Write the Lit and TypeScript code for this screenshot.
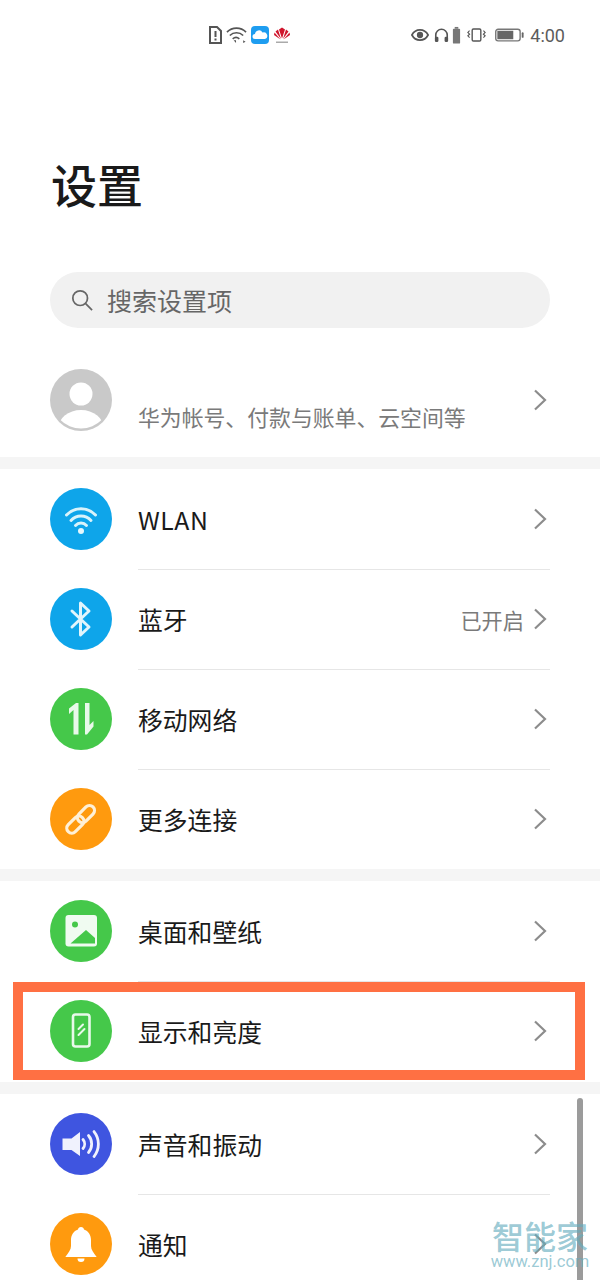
import { LitElement, html, css, svg } from "lit";
import { customElement } from "lit/decorators.js";

const icons = {
  wifi: svg`<g fill="none" stroke="#d8f3fb" stroke-width="3" stroke-linecap="round">
      <path d="M16.5 27a20 20 0 0 1 29 0"/><path d="M21 32.500a13.500 13.500 0 0 1 20 0"/><path d="M25.500 37.500a7.500 7.500 0 0 1 11 0"/>
    </g><circle cx="31" cy="43" r="3" fill="#e6f8fd"/>`,
  bluetooth: svg`<path d="M22 23l17 16-8.500 8V15l8.500 8-17 16" fill="none" stroke="#e2f5fc" stroke-width="3" stroke-linejoin="round" stroke-linecap="round"/>`,
  mobile: svg`<path d="M23.500 46.500V22l-4.500 4v-5.500L26 15h2.500v31.500z" fill="#e8f9ea"/>
    <path d="M35 15h4.500v22l4-4v5.500L37 46.500h-2z" fill="#e8f9ea"/>`,
  link: svg`<g fill="none" stroke="#fff0d6" stroke-width="3.200" stroke-linecap="round" transform="rotate(-45 31 31)">
      <rect x="13" y="26" width="20" height="10" rx="5"/><rect x="28" y="26" width="20" height="10" rx="5"/>
    </g>`,
  picture: svg`<rect x="15.500" y="15" width="31.500" height="31.500" rx="3" fill="#f0fbf1"/>
    <circle cx="25" cy="24.500" r="3" fill="#45c84a"/>
    <path d="M20.500 43.500L36 30l9 8v5.500z" fill="#45c84a"/>`,
  phone: svg`<rect x="23" y="14.500" width="16.500" height="32" rx="2.500" fill="none" stroke="#e8f9ea" stroke-width="2.600"/>
    <path d="M28.500 29l4.500-4.500M28.500 35l6-6" stroke="#e8f9ea" stroke-width="2" stroke-linecap="round"/>`,
  sound: svg`<path d="M12.500 25.500h9L30 19v24l-8.500-6h-9z" fill="#f0f2fd"/>
    <g fill="none" stroke="#f0f2fd" stroke-width="2.800" stroke-linecap="round">
      <path d="M33 26.500a7 7 0 0 1 0 9"/><path d="M38.500 22.500a13 13 0 0 1 0 17"/><path d="M44 18.500a20 20 0 0 1 0 25"/>
    </g>`,
  bell: svg`<path d="M31 14c1.800 0 2.800 1 3 2.500 4.500 1.500 7 5.500 7 10.500v6c0 3.500 2.500 7 5.700 11H15.300c3.200-4 5.700-7.500 5.700-11v-6c0-5 2.500-9 7-10.500.2-1.500 1.200-2.500 3-2.500z" fill="#fff"/>
    <path d="M27.500 45.500h7a3.500 3.500 0 0 1-7 0z" fill="#fff"/>`,
};

type Row = { icon: keyof typeof icons; color: string; label: string; value?: string };

const groups: Row[][] = [
  [
    { icon: "wifi", color: "#0ea5ea", label: "WLAN" },
    { icon: "bluetooth", color: "#0ea5ea", label: "蓝牙", value: "已开启" },
    { icon: "mobile", color: "#45c84a", label: "移动网络" },
    { icon: "link", color: "#ff9a0e", label: "更多连接" },
  ],
  [
    { icon: "picture", color: "#45c84a", label: "桌面和壁纸" },
    { icon: "phone", color: "#45c84a", label: "显示和亮度" },
  ],
  [
    { icon: "sound", color: "#3f55e0", label: "声音和振动" },
    { icon: "bell", color: "#ff9a0e", label: "通知" },
  ],
];

const chevron = html`<svg class="chevron" width="14" height="22" viewBox="0 0 14 22">
  <path d="M2 1.500l10 9.500-10 9.500" fill="none" stroke="#8c8c8c" stroke-width="2.200"/>
</svg>`;

@customElement("app-root")
export class AppRoot extends LitElement {
  static styles = css`
    :host {
      display: block;
      position: relative;
      width: 600px;
      height: 1280px;
      overflow: hidden;
      background: #fff;
      color: #1a1a1a;
      font-family: "Noto Sans CJK SC", "Noto Sans", sans-serif;
    }
    .status {
      height: 70px;
      display: flex;
      align-items: center;
      padding-left: 208px;
      padding-right: 35px;
    }
    .status-left {
      display: flex;
      align-items: center;
      gap: 4px;
    }
    .status-right {
      display: flex;
      align-items: center;
      margin-left: auto;
    }
    .headset {
      margin-left: 5px;
    }
    .mini-battery {
      margin-left: 3px;
    }
    .vibrate {
      margin-left: 6px;
    }
    .battery {
      margin-left: 9px;
    }
    .time {
      font-family: "Roboto", sans-serif;
      font-size: 18px;
      margin-left: 5px;
      color: #5c5c5c;
    }
    .cloud {
      width: 18px;
      height: 18px;
      border-radius: 4px;
      background: #1e9df0;
      display: flex;
    }
    h1 {
      margin: 0;
      padding: 83px 0 0 51px;
      font-size: 46px;
      line-height: 60px;
      font-weight: 500;
    }
    .search {
      margin: 59px 50px 0;
      height: 56px;
      border-radius: 28px;
      background: #f1f1f1;
      display: flex;
      align-items: center;
      gap: 14px;
      padding-left: 21px;
      font-size: 25px;
      color: #666;
    }
    .profile {
      height: 114px;
      padding: 15px 50px 0;
      display: flex;
      align-items: center;
    }
    .avatar {
      display: block;
      flex: none;
    }
    .profile-text {
      flex: 1;
      margin-left: 26px;
      padding-top: 33px;
      font-size: 21.850px;
      color: #7a7a7a;
    }
    .gap {
      height: 12px;
      background: #f5f5f5;
    }
    .group:nth-child(4) {
      margin-bottom: 1px;
    }
    .row {
      height: 100px;
      display: flex;
      align-items: center;
      padding: 0 50px;
    }
    .row-icon {
      flex: none;
      display: block;
    }
    .row-body {
      flex: 1;
      align-self: flex-start;
      height: 100px;
      margin-left: 26px;
      display: flex;
      align-items: center;
      font-size: 24.800px;
      border-bottom: 1px solid #e6e6e6;
    }
    .row:last-child .row-body {
      border-bottom: 0;
    }
    .label-latin {
      letter-spacing: 0.5px;
    }
    .value {
      margin-left: auto;
      font-size: 21.200px;
      color: #7a7a7a;
    }
    .chevron {
      margin-left: auto;
      margin-right: 3px;
      flex: none;
    }
    .value + .chevron {
      margin-left: 9px;
    }
    .highlight {
      position: absolute;
      left: 13px;
      top: 982px;
      width: 572px;
      height: 98px;
      box-sizing: border-box;
      border: 10px solid #ff7043;
    }
    .scrollbar {
      position: absolute;
      left: 577px;
      top: 1098px;
      width: 6px;
      height: 182px;
      border-radius: 3px 3px 0 0;
      background: #9b9b9b;
    }
    .watermark {
      position: absolute;
      left: 490px;
      top: 1218px;
      width: 100px;
      color: rgba(100, 172, 190, 0.65);
      text-align: center;
    }
    .wm-name {
      font-size: 32px;
      line-height: 35px;
      font-weight: 500;
    }
    .wm-url {
      font-family: "Roboto", sans-serif;
      font-size: 16.500px;
      line-height: 18px;
      white-space: nowrap;
    }
  `;

  renderStatus() {
    return html`<div class="status">
      <div class="status-left">
        <svg width="14" height="18" viewBox="0 0 14 18">
          <path d="M2 1h7l4 4v12H2z" fill="none" stroke="#555" stroke-width="2"/>
          <path d="M7.500 5v6M7.500 12.500v2" stroke="#555" stroke-width="2"/>
        </svg>
        <svg width="21" height="18" viewBox="0 0 22 18">
          <g fill="none" stroke="#555" stroke-width="1.700">
            <path d="M1 6a14 14 0 0 1 20 0"/><path d="M4 9.500a10 10 0 0 1 14 0"/><path d="M7 13a5.500 5.500 0 0 1 7 0"/>
          </g>
          <path d="M8 14.500h2.500v3zM13 14.500h3M18 14.500v3l2.500-1.500z" fill="#555"/>
        </svg>
        <div class="cloud">
          <svg width="18" height="18" viewBox="0 0 18 18">
            <path d="M4 13a2.500 2.500 0 0 1 0-5 4 4 0 0 1 7.500-1.500A3.300 3.300 0 0 1 14 13z" fill="#fff"/>
          </svg>
        </div>
        <svg width="18" height="18" viewBox="0 0 18 18">
          <g fill="#d0152c">
            <path d="M9 12.500L6 3.500l3-2 0 11zM9 12.500l3-9-3-2zM8 13L2.500 5.500 5 3.500zM10 13l5.500-7.500L13 3.500zM7.500 13.500L1 9l.5-2.500zM10.500 13.500L17 9l-.5-2.500z"/>
          </g>
          <rect x="3" y="15.500" width="12" height="1.500" fill="#aaa"/>
        </svg>
      </div>
      <div class="status-right">
        <svg width="18" height="14" viewBox="0 0 20 14">
          <path d="M1 7c4-7.500 14-7.500 18 0-4 7.500-14 7.500-18 0z" fill="none" stroke="#555" stroke-width="1.900"/>
          <circle cx="10" cy="7" r="3.500" fill="#555"/>
        </svg>
        <svg class="headset" width="15" height="18" viewBox="0 0 17 18">
          <path d="M2 13V9a6.500 6.500 0 0 1 13 0v4" fill="none" stroke="#555" stroke-width="1.800"/>
          <rect x="1" y="11" width="4" height="6" rx="1.500" fill="#555"/>
          <rect x="12" y="11" width="4" height="6" rx="1.500" fill="#555"/>
        </svg>
        <svg class="mini-battery" width="9" height="19" viewBox="0 0 10 19">
          <rect x="3" y="0" width="4" height="2" fill="#777"/>
          <rect x="1" y="2" width="8" height="16.500" rx="1" fill="#777"/>
        </svg>
        <svg class="vibrate" width="19" height="18" viewBox="0 0 22 18">
          <rect x="6" y="2" width="10" height="14" rx="1.500" fill="none" stroke="#555" stroke-width="1.600"/>
          <path d="M3 4L1 6l2 2-2 2 2 2M19 4l2 2-2 2 2 2-2 2" fill="none" stroke="#555" stroke-width="1.300"/>
        </svg>
        <svg class="battery" width="30" height="16" viewBox="0 0 32 16">
          <rect x=".8" y="1.800" width="26" height="12.500" rx="2.500" fill="none" stroke="#777" stroke-width="1.500"/>
          <rect x="2.500" y="3.500" width="17" height="9" fill="#666"/>
          <rect x="28.500" y="5" width="2" height="6" rx="1" fill="#666"/>
        </svg>
        <span class="time">4:00</span>
      </div>
    </div>`;
  }

  renderRow(row: Row) {
    const latin = /^[A-Z]+$/.test(row.label);
    return html`<div class="row">
      <svg class="row-icon" width="62" height="62" viewBox="0 0 62 62">
        <circle cx="31" cy="31" r="31" fill=${row.color}/>
        ${icons[row.icon]}
      </svg>
      <div class="row-body">
        <span class=${latin ? "label-latin" : ""}>${row.label}</span>
        ${row.value ? html`<span class="value">${row.value}</span>` : ""}
        ${chevron}
      </div>
    </div>`;
  }

  render() {
    return html`
      ${this.renderStatus()}
      <h1>设置</h1>
      <div class="search">
        <svg width="22" height="22" viewBox="0 0 24 24">
          <circle cx="10" cy="10" r="8" fill="none" stroke="#666" stroke-width="1.900"/>
          <path d="M16 16l7 7" stroke="#666" stroke-width="1.900"/>
        </svg>
        <span>搜索设置项</span>
      </div>
      <div class="profile">
        <svg class="avatar" width="62" height="62" viewBox="0 0 62 62">
          <defs><clipPath id="av"><circle cx="31" cy="30" r="29.500"/></clipPath></defs>
          <circle cx="31" cy="31" r="31" fill="#c9c9c9"/>
          <circle cx="31" cy="25" r="11.500" fill="#fff"/>
          <ellipse cx="31" cy="60" rx="23" ry="19" fill="#fff" clip-path="url(#av)"/>
        </svg>
        <div class="profile-text">华为帐号、付款与账单、云空间等</div>
        ${chevron}
      </div>
      <div class="groups">
        ${groups.map(
          (group) => html`<div class="gap"></div>
            <div class="group">${group.map((row) => this.renderRow(row))}</div>`
        )}
      </div>
      <div class="highlight"></div>
      <div class="scrollbar"></div>
      <div class="watermark">
        <div class="wm-name">智能家</div>
        <div class="wm-url">www.znj.com</div>
      </div>
    `;
  }
}
